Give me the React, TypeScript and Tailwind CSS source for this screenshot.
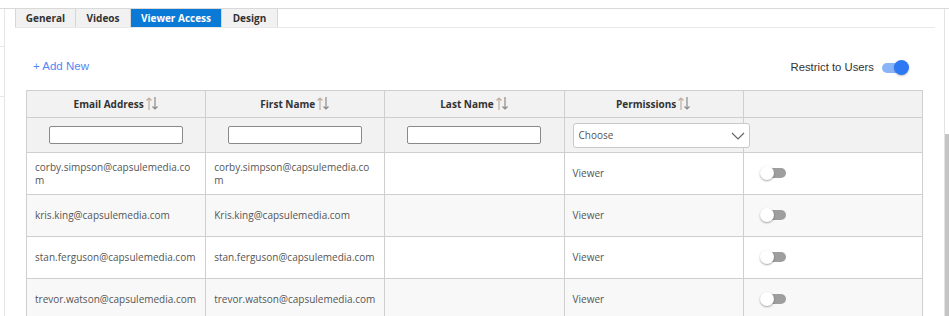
import { useState } from "react";

const tabs = ["General", "Videos", "Viewer Access", "Design"];
const tabWidths = ["w-[61px]", "w-[56px]", "w-[92px]", "w-[57px]"];

const users = [
  { email: "corby.simpson@capsulemedia.com", first: "corby.simpson@capsulemedia.com" },
  { email: "kris.king@capsulemedia.com", first: "Kris.king@capsulemedia.com" },
  { email: "stan.ferguson@capsulemedia.com", first: "stan.ferguson@capsulemedia.com" },
  { email: "trevor.watson@capsulemedia.com", first: "trevor.watson@capsulemedia.com" },
];

function SortArrows() {
  return (
    <svg width="14" height="15" viewBox="0 0 14 15" className="inline-block ml-[1px] -mt-[3px] align-middle">
      <path d="M4 14V2M1.5 4.5L4 2l2.5 2.5" fill="none" stroke="#bfae9f" strokeWidth="1.2" />
      <path d="M10 1v12M7.5 10.5L10 13l2.5-2.5" fill="none" stroke="#8a8a8a" strokeWidth="1.2" />
    </svg>
  );
}

function OffToggle() {
  return (
    <div className="relative w-[27px] h-[14px]">
      <div className="absolute left-[6px] top-[2px] w-[20px] h-[10px] rounded-full bg-[#9e9e9e]" />
      <div className="absolute left-0 top-0 w-[14px] h-[14px] rounded-full bg-white shadow-[0_1px_2px_rgba(0,0,0,0.35)]" />
    </div>
  );
}

export default function App() {
  const [restrict] = useState(true);
  return (
    <div className="w-[949px] h-[316px] overflow-hidden bg-white relative font-['Open_Sans',sans-serif] text-[#555]">
      <div className="h-[8px]" />
      <div className="flex h-[308px] border-t border-[#d9d9d9] shadow-[0_1px_2px_rgba(0,0,0,0.08)]">
        {/* left strip */}
        <div className="w-[5px] shrink-0 border-r border-[#e6e6e6] flex flex-col">
          <div className="h-[38px] shrink-0 border-b border-[#e6e6e6]" />
          <div className="h-[50px] shrink-0 border-b border-[#e6e6e6]" />
        </div>

        {/* main */}
        <div className="flex-1 flex flex-col">
          <div className="ml-[10px] mr-[9px] flex shrink-0 border-b border-[#e8e8e8] h-[19px]">
            {tabs.map((t, i) => (
              <div
                key={t}
                className={
                  tabWidths[i] +
                  " flex items-center justify-center text-[10px] font-bold border-x border-[#d6d6d6] -ml-[1px] first:ml-0 " +
                  (t === "Viewer Access" ? "bg-[#0b79d6] text-white border-[#0b79d6]" : "bg-[#f1f1f1] text-[#333]")
                }
              >
                {t}
              </div>
            ))}
          </div>

          <div className="flex shrink-0 items-center justify-between pl-[28px] pr-[35px] mt-[31px] h-[16px]">
            <span className="font-['Liberation_Sans',Arial,sans-serif] text-[11.5px] text-[#5486f3]">+ Add New</span>
            <div className="flex items-center gap-[8px]">
              <span className="font-['Liberation_Sans',Arial,sans-serif] text-[11.3px] text-[#333]">Restrict to Users</span>
              <div className="relative w-[27px] h-[15px]">
                <div className="absolute left-0 top-[3px] w-[22px] h-[10px] rounded-full bg-[#8ab4f8]" />
                <div
                  className={
                    "absolute top-[0px] w-[15px] h-[15px] rounded-full bg-[#2f78f3] shadow-[0_1px_2px_rgba(0,0,0,0.25)] " +
                    (restrict ? "left-[12px]" : "left-0")
                  }
                />
              </div>
            </div>
          </div>

          <div className="px-[21px] mt-[15px] shrink-0">
            <table className="w-full table-fixed border-collapse text-[10px]">
              <thead>
                <tr className="bg-[#f2f2f2] h-[27px]">
                  {["Email Address", "First Name", "Last Name", "Permissions"].map((h) => (
                    <th key={h} className="border border-[#cfcfcf] font-bold text-[#333] text-center">
                      {h}
                      <SortArrows />
                    </th>
                  ))}
                  <th className="border border-[#cfcfcf]" />
                </tr>
                <tr className="bg-[#f2f2f2] h-[35px]">
                  {[0, 1, 2].map((i) => (
                    <td key={i} className="border border-[#cfcfcf] text-center">
                      <input className="w-[134px] h-[18px] bg-white border border-[#8a8a8a] rounded-[2px] align-middle" />
                    </td>
                  ))}
                  <td className="border border-[#cfcfcf] pl-[8px] relative">
                    <div className="absolute left-[8px] top-[5px] w-[177px] h-[25px] bg-white border border-[#c9c9c9] rounded-[3px] flex items-center justify-between pl-[5px] pr-[4px] z-10">
                      <span className="text-[10px] text-[#555]">Choose</span>
                      <svg width="14" height="8" viewBox="0 0 14 8">
                        <path d="M1 1l6 6 6-6" fill="none" stroke="#666" strokeWidth="1.2" />
                      </svg>
                    </div>
                  </td>
                  <td className="border border-[#cfcfcf]" />
                </tr>
              </thead>
              <tbody>
                {users.map((u, i) => (
                  <tr key={u.email} className={(i % 2 === 1 ? "bg-[#f8f8f8]" : "bg-white") + " h-[42px]"}>
                    <td className="border border-[#cfcfcf] px-[8px] leading-[13px] break-all">{u.email}</td>
                    <td className="border border-[#cfcfcf] px-[8px] leading-[13px] break-all">{u.first}</td>
                    <td className="border border-[#cfcfcf]" />
                    <td className="border border-[#cfcfcf] px-[8px]">Viewer</td>
                    <td className="border border-[#cfcfcf] pl-[16px]">
                      <div className="-mt-[2px]">
                        <OffToggle />
                      </div>
                    </td>
                  </tr>
                ))}
              </tbody>
            </table>
          </div>
        </div>

        {/* right scroll area */}
        <div className="w-[5px] shrink-0 border-l border-[#e3e3e3] flex flex-col">
          <div className="h-[125px] shrink-0" />
          <div className="flex-1 bg-[#c4c4c4]" />
        </div>
      </div>
    </div>
  );
}
